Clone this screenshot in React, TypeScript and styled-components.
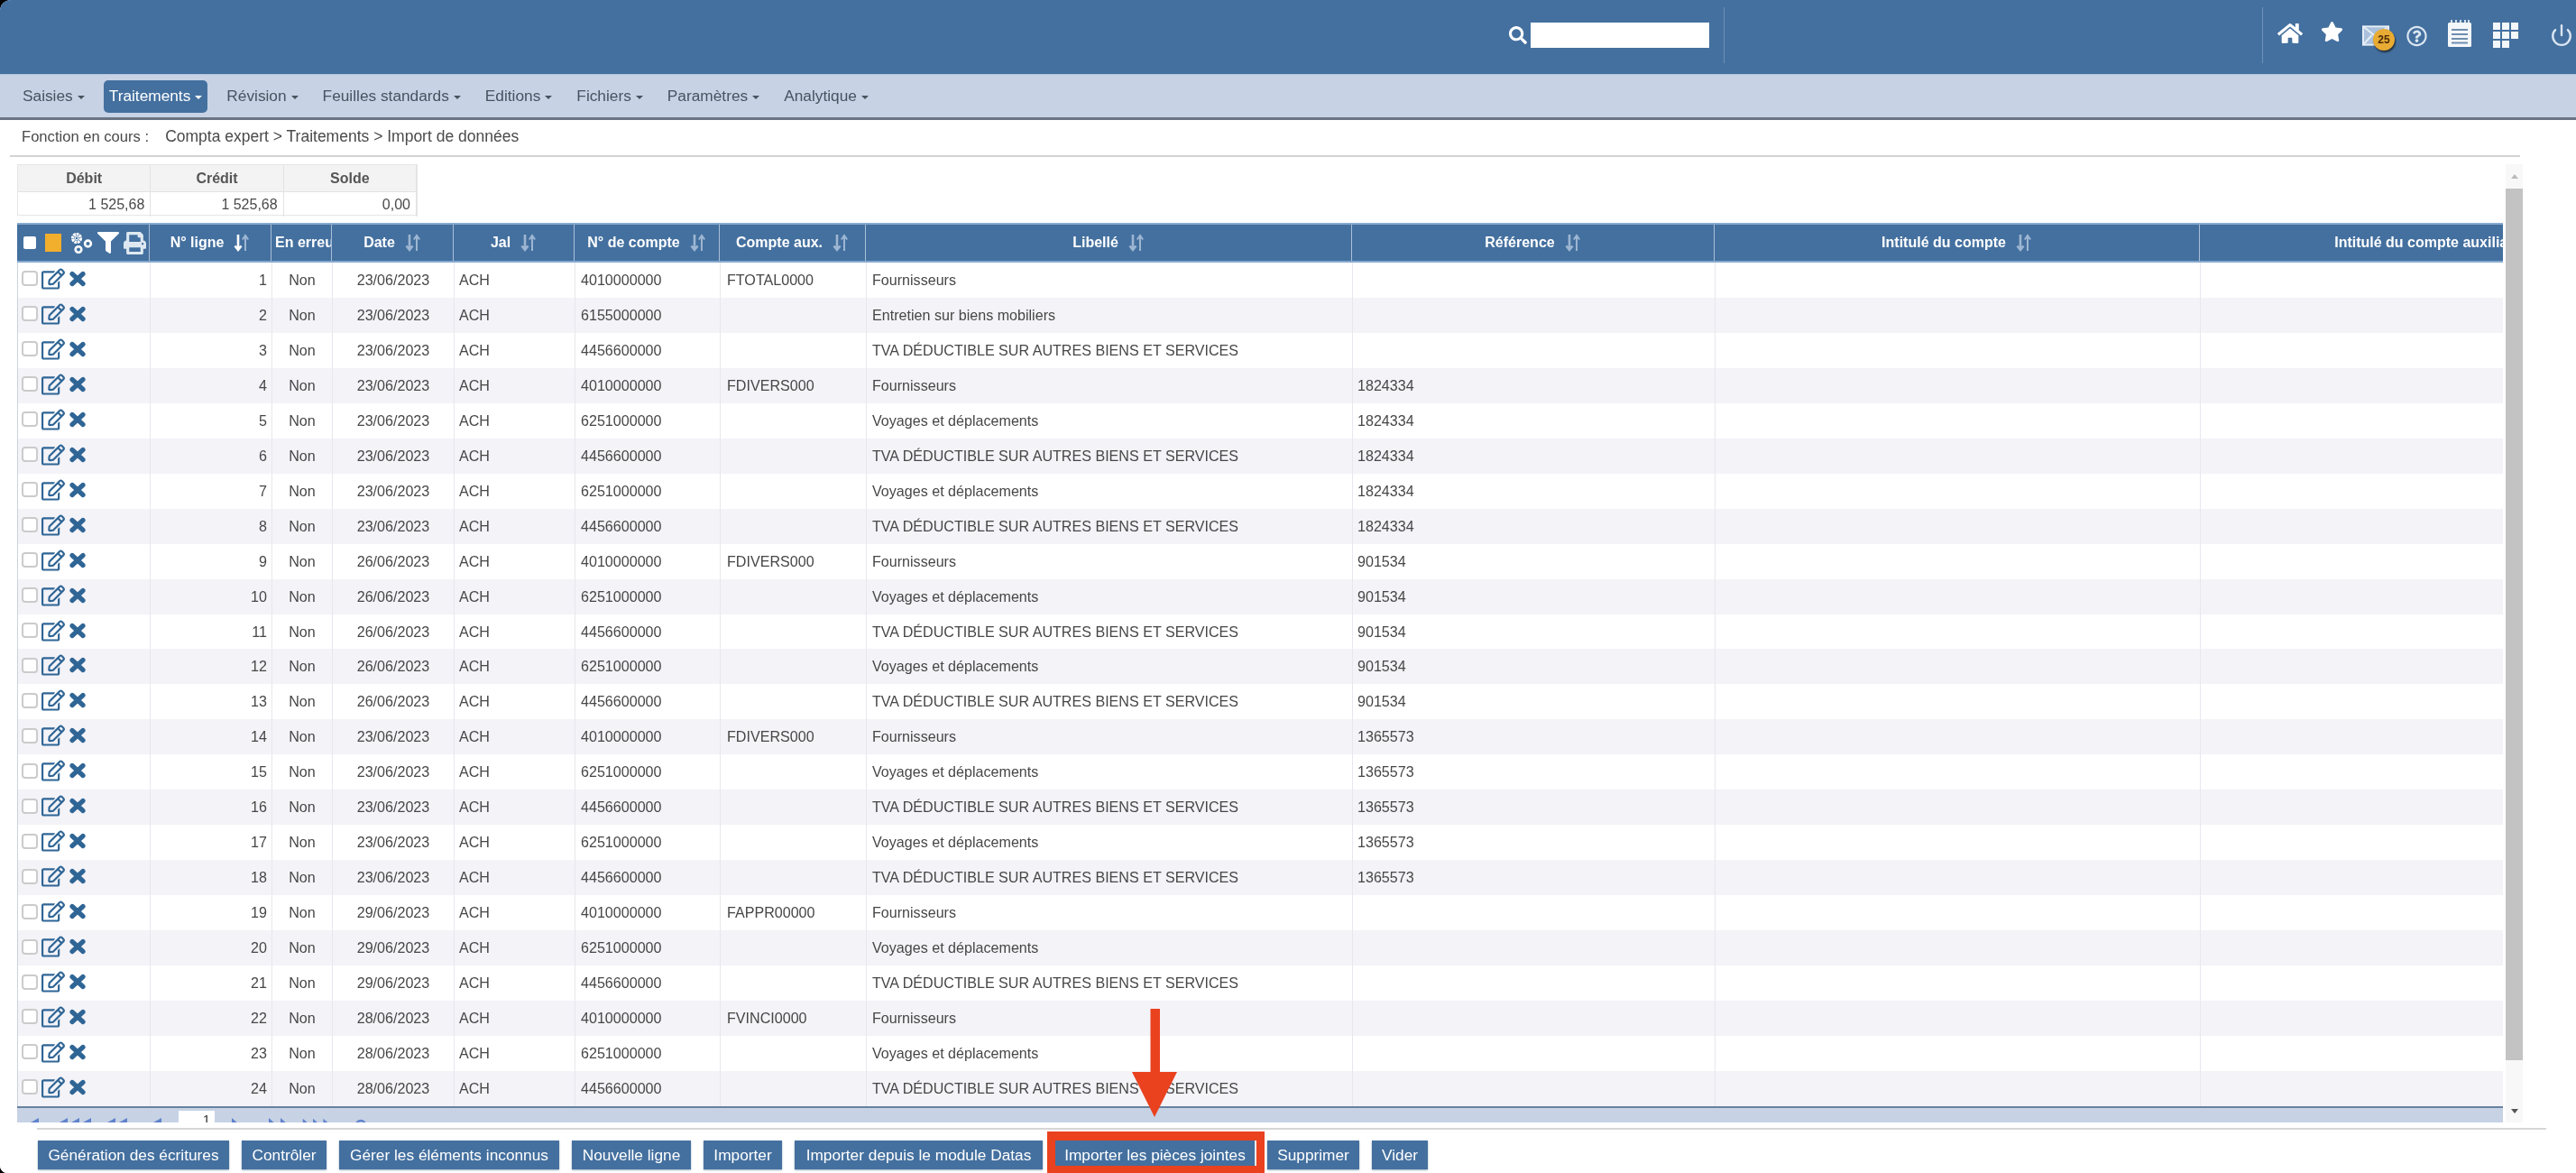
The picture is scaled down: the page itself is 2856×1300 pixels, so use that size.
import React from 'react';
import styled, { createGlobalStyle } from 'styled-components';
import { FaHome, FaStar, FaSearch, FaFilter, FaPrint, FaRegEdit, FaRegQuestionCircle } from 'react-icons/fa';
import { FiPower } from 'react-icons/fi';

const BLUE = '#44709f';
const PALE = '#c7d2e5';

const Global = createGlobalStyle`
  html, body { margin: 0; padding: 0; background: #000; }
  body { width: 2856px; height: 1300px; overflow: hidden; font-family: "Liberation Sans", Arial, sans-serif; }
  * { box-sizing: border-box; }
`;

const Stage = styled.div`
  position: relative;
  width: 2856px;
  height: 1300px;
  background: #fff;
  border-radius: 12px 0 0 8px;
  overflow: hidden;
`;

const Screen = styled.div`
  width: 2856px;
  height: 1300px;
  display: flex;
  flex-direction: column;
  background: #fff;
  filter: blur(0.7px);
`;

const TopBar = styled.header`
  height: 82px;
  flex: none;
  background: ${BLUE};
  display: flex;
  align-items: center;
  padding: 0 3px 4px 1672px;
  color: #fff;
`;

const SearchInput = styled.div`
  width: 198px;
  height: 28px;
  margin-left: 3px;
  background: #fff;
`;

const Divider = styled.div<{ $gap: number }>`
  width: 1px;
  height: 62px;
  margin-left: ${p => p.$gap}px;
  background: #6d90b6;
`;

const TopIcon = styled.div<{ $gap: number; $w: number; $dy?: number; $color?: string }>`
  position: relative;
  flex: none;
  width: ${p => p.$w}px;
  margin-left: ${p => p.$gap}px;
  margin-top: ${p => p.$dy ?? 0}px;
  display: flex;
  justify-content: center;
  color: ${p => p.$color ?? '#fff'};
`;

const Badge = styled.span`
  position: absolute;
  left: 12px;
  top: 4px;
  width: 24px;
  height: 24px;
  border-radius: 50%;
  background: #e8ab33;
  box-shadow: 1px 2px 2px #20303f;
  color: #4a2c08;
  font-size: 12px;
  font-weight: 700;
  display: flex;
  align-items: center;
  justify-content: center;
`;

const MenuBar = styled.nav`
  height: 48px;
  flex: none;
  background: ${PALE};
  border-top: 1px solid #b4c6e2;
  display: flex;
  align-items: center;
  gap: 15px;
  padding-left: 19px;
`;

const MenuItem = styled.div<{ $active?: boolean }>`
  height: 36px;
  padding: 0 6px;
  border-radius: 5px;
  display: flex;
  align-items: center;
  gap: 5px;
  font-size: 17.3px;
  color: ${p => (p.$active ? '#fff' : '#47535f')};
  background: ${p => (p.$active ? BLUE : 'transparent')};
`;

const Caret = styled.i`
  width: 0;
  height: 0;
  margin-top: 2px;
  border-left: 4px solid transparent;
  border-right: 4px solid transparent;
  border-top: 4px solid currentColor;
`;

const DarkRule = styled.div`
  height: 3px;
  flex: none;
  background: #6a7382;
`;

const Crumb = styled.div`
  height: 41px;
  flex: none;
  width: 2783px;
  margin-left: 11px;
  padding: 0 0 2px 13px;
  border-bottom: 2px solid #d3d3d6;
  display: flex;
  align-items: center;
  gap: 18px;
  font-size: 16.6px;
  color: #4a4a4a;
`;

const CrumbPath = styled.span`
  font-size: 17.5px;
`;

const Body = styled.main`
  height: 1062px;
  flex: none;
  margin-top: 8px;
  padding-left: 19px;
  display: flex;
`;

const LeftCol = styled.div`
  width: 2756px;
  display: flex;
  flex-direction: column;
`;

const Summary = styled.div`
  width: 444px;
  height: 57px;
  flex: none;
  display: grid;
  grid-template-columns: repeat(3, 1fr);
  grid-template-rows: 30px 27px;
  border: 1px solid #e6e6e6;
  font-size: 16px;
  color: #4a4a4a;
`;

const SumHead = styled.div`
  background: #f3f3f3;
  border-right: 1px solid #e2e2e2;
  border-bottom: 1px solid #e2e2e2;
  font-weight: 700;
  display: flex;
  align-items: center;
  justify-content: center;
  color: #555;
`;

const SumValue = styled.div`
  border-right: 1px solid #e2e2e2;
  display: flex;
  align-items: center;
  justify-content: flex-end;
  padding-right: 6px;
`;

const Grid = styled.section`
  flex: 1;
  margin-top: 8px;
  display: flex;
  flex-direction: column;
  overflow: hidden;
`;

const COLS = '147px 135px 67px 135px 134px 161px 162px 539px 402px 538px 540px';

const HeadRow = styled.div`
  width: 2960px;
  height: 44px;
  flex: none;
  display: grid;
  grid-template-columns: ${COLS};
  background: ${BLUE};
  border-top: 2px solid #86a9cf;
  border-bottom: 2px solid #86a9cf;
`;

const HeadCell = styled.div<{ $left?: boolean }>`
  border-right: 1px solid #a8bfd8;
  display: flex;
  align-items: center;
  justify-content: ${p => (p.$left ? 'flex-start' : 'center')};
  gap: 11px;
  padding: ${p => (p.$left ? '0 0 0 4px' : '0')};
  overflow: hidden;
  white-space: nowrap;
  color: #fff;
  font-size: 16px;
  font-weight: 700;
`;

const HeadTools = styled(HeadCell)`
  justify-content: flex-start;
  padding-left: 7px;
  gap: 0;
`;

const WhiteBox = styled.span`
  width: 14px;
  height: 14px;
  border-radius: 2px;
  background: #fff;
  margin-right: 10px;
`;

const OrangeBox = styled.span`
  width: 18px;
  height: 20px;
  background: #f2ae2d;
  margin-right: 10px;
`;

const ToolSlot = styled.span<{ $gap: number }>`
  display: flex;
  margin-right: ${p => p.$gap}px;
`;

const Rows = styled.div`
  width: 2960px;
  flex: none;
  border-left: 1px solid #c9d2dc;
`;

const Row = styled.div<{ $even: boolean }>`
  height: 38.96px;
  display: grid;
  grid-template-columns: ${COLS};
  background: ${p => (p.$even ? '#f3f3f8' : '#fff')};
  color: #474747;
  font-size: 16.1px;
`;

const Cell = styled.div<{ $align?: 'left' | 'center' | 'right'; $pad?: number }>`
  border-right: 1px solid #e7e7ee;
  display: flex;
  align-items: center;
  white-space: nowrap;
  overflow: hidden;
  justify-content: ${p => (p.$align === 'right' ? 'flex-end' : p.$align === 'center' ? 'center' : 'flex-start')};
  padding: 0 ${p => p.$pad ?? 5}px;
`;

const Check = styled.span`
  flex: none;
  width: 18px;
  height: 17px;
  border: 2px solid #cbcbcb;
  border-radius: 4px;
  background: #fff;
`;

const RowActions = styled(Cell)`
  color: #2f6595;
  padding-left: 4px;
  gap: 4px;
  padding-bottom: 3px;
`;

const Pager = styled.div`
  height: 19px;
  flex: none;
  background: ${PALE};
  border-top: 2px solid #66829f;
  display: flex;
  overflow: hidden;
`;

const PagerSlot = styled.div<{ $w: number }>`
  width: ${p => p.$w}px;
  flex: none;
  display: flex;
  justify-content: center;
  padding-top: 11px;
  color: #5f83cc;
`;

const PagerInput = styled.div`
  width: 40px;
  margin-top: 3px;
  flex: none;
  background: #fff;
  color: #333;
  font-size: 15px;
  text-align: right;
  padding: 1px 5px 0 0;
`;

const Scrollbar = styled.aside`
  width: 19px;
  margin-left: 3px;
  flex: none;
  background: #f8f8f8;
  display: flex;
  flex-direction: column;
`;

const ScrollButton = styled.div<{ $h: number; $down?: boolean }>`
  height: ${p => p.$h}px;
  flex: none;
  display: flex;
  justify-content: center;
  align-items: ${p => (p.$down ? 'flex-end' : 'center')};
  padding-bottom: ${p => (p.$down ? 10 : 0)}px;
  &::before {
    content: '';
    border-left: 4px solid transparent;
    border-right: 4px solid transparent;
    ${p => (p.$down ? 'border-top: 5px solid #555;' : 'border-bottom: 5px solid #bbb;')}
  }
`;

const ScrollThumb = styled.div`
  height: 966px;
  flex: none;
  background: #c3c3c3;
`;

const BottomRule = styled.div`
  height: 2px;
  flex: none;
  width: 2782px;
  margin: 6px 0 0 41px;
  background: #d6d6d6;
`;

const Actions = styled.footer`
  flex: none;
  display: flex;
  gap: 14px;
  margin-top: 12px;
  padding-left: 42px;
`;

const ActionButton = styled.button<{ $w: number }>`
  width: ${p => p.$w}px;
  height: 32px;
  padding: 0;
  border: 0;
  background: ${BLUE};
  color: #fff;
  font-family: inherit;
  font-size: 17.3px;
  white-space: nowrap;
  box-shadow: 0 1px 2px #9fb0c3;
`;

const RedFrame = styled.div`
  position: absolute;
  left: 1161px;
  top: 1254px;
  width: 241px;
  height: 46px;
  border: solid #ea411f;
  border-width: 10px 9px 8px 9px;
`;

const Arrow = styled.svg`
  position: absolute;
  left: 1255px;
  top: 1118px;
`;

const SortIcon = ({ active }: { active?: boolean }) => (
  <svg width="18" height="22" viewBox="0 0 18 22" fill="none">
    <path d="M5 2v16M1.5 14.5 5 19l3.500-4.500" stroke={active ? '#fff' : '#9db6d2'} strokeWidth="2.6" />
    <path d="M13 20V4M9.800 7.500 13 3l3.200 4.500" stroke="#9db6d2" strokeWidth="2" />
  </svg>
);

const Cogs = () => (
  <svg width="25" height="23" viewBox="0 0 25 23" fill="none" stroke="#fff" strokeWidth="2.6">
    <circle cx="7" cy="6" r="4.400" strokeDasharray="2.600 .7" strokeWidth="3.400" />
    <circle cx="7" cy="6" r="1.800" strokeWidth="1" />
    <circle cx="19.500" cy="12" r="3.400" />
    <circle cx="9" cy="18.500" r="3.300" />
  </svg>
);

const Mail = () => (
  <svg width="32" height="23" viewBox="0 0 32 23">
    <rect x="1" y="1" width="29" height="21" fill="#a9c1dc" stroke="#e6eef6" strokeWidth="2" />
    <path d="M1 1l14 11L30 1M1 22l10-11" fill="none" stroke="#e6eef6" strokeWidth="2" />
  </svg>
);

const Notepad = () => (
  <svg width="26" height="30" viewBox="0 0 26 30">
    <rect x="0" y="3" width="26" height="27" rx="1.500" fill="#f4f7fa" />
    <path d="M4 0v5M9 0v5M14 0v5M19 0v5M23 0v5" stroke="#f4f7fa" strokeWidth="1.600" />
    <path d="M4 11h18M4 16h18M4 21h18M4 25.500h18" stroke="#6f8eaf" strokeWidth="1.800" />
  </svg>
);

const Tiles = () => (
  <svg width="28" height="28" viewBox="0 0 28 28" fill="#f4f7fa">
    {[0, 10, 20].map(x => [0, 10].map(y => <rect key={`${x}-${y}`} x={x} y={y} width="8" height="8" />))}
    <rect x="0" y="20" width="8" height="8" />
    <rect x="10" y="20" width="8" height="8" />
  </svg>
);

const Cross = () => (
  <svg width="20" height="18" viewBox="0 0 20 18" fill="none" stroke="currentColor" strokeWidth="5.200" strokeLinecap="round">
    <path d="M4 3.500 16 14.500M16 3.500 4 14.500" />
  </svg>
);

const Tri = ({ n, dir }: { n: number; dir: 'l' | 'r' }) => (
  <svg width={n * 13} height="11" viewBox={`0 0 ${n * 13} 11`} fill="currentColor">
    {Array.from({ length: n }).map((_, i) => (
      <path key={i} d={dir === 'l' ? `M${i * 13 + 2} 5 L${i * 13 + 11} 0 V11Z` : `M${i * 13 + 2} 0 L${i * 13 + 11} 8 V11 H${i * 13 + 2}Z`} />
    ))}
  </svg>
);

type Kind = 'F' | 'V' | 'T' | 'E';
const LABEL: Record<Kind, string> = {
  F: 'Fournisseurs',
  V: 'Voyages et déplacements',
  T: 'TVA DÉDUCTIBLE SUR AUTRES BIENS ET SERVICES',
  E: 'Entretien sur biens mobiliers',
};
const ACCOUNT: Record<Kind, string> = { F: '4010000000', V: '6251000000', T: '4456600000', E: '6155000000' };

const DATA: [number, string, Kind, string, string][] = [
  [1, '23/06/2023', 'F', 'FTOTAL0000', ''],
  [2, '23/06/2023', 'E', '', ''],
  [3, '23/06/2023', 'T', '', ''],
  [4, '23/06/2023', 'F', 'FDIVERS000', '1824334'],
  [5, '23/06/2023', 'V', '', '1824334'],
  [6, '23/06/2023', 'T', '', '1824334'],
  [7, '23/06/2023', 'V', '', '1824334'],
  [8, '23/06/2023', 'T', '', '1824334'],
  [9, '26/06/2023', 'F', 'FDIVERS000', '901534'],
  [10, '26/06/2023', 'V', '', '901534'],
  [11, '26/06/2023', 'T', '', '901534'],
  [12, '26/06/2023', 'V', '', '901534'],
  [13, '26/06/2023', 'T', '', '901534'],
  [14, '23/06/2023', 'F', 'FDIVERS000', '1365573'],
  [15, '23/06/2023', 'V', '', '1365573'],
  [16, '23/06/2023', 'T', '', '1365573'],
  [17, '23/06/2023', 'V', '', '1365573'],
  [18, '23/06/2023', 'T', '', '1365573'],
  [19, '29/06/2023', 'F', 'FAPPR00000', ''],
  [20, '29/06/2023', 'V', '', ''],
  [21, '29/06/2023', 'T', '', ''],
  [22, '28/06/2023', 'F', 'FVINCI0000', ''],
  [23, '28/06/2023', 'V', '', ''],
  [24, '28/06/2023', 'T', '', ''],
];

const MENU = ['Saisies', 'Traitements', 'Révision', 'Feuilles standards', 'Editions', 'Fichiers', 'Paramètres', 'Analytique'];
const HEADS: string[] = ['Jal', 'N° de compte', 'Compte aux.', 'Libellé', 'Référence', 'Intitulé du compte', 'Intitulé du compte auxiliaire'];
const BUTTONS: [string, number][] = [
  ['Génération des écritures', 212], ['Contrôler', 94], ['Gérer les éléments inconnus', 244], ['Nouvelle ligne', 132],
  ['Importer', 87], ['Importer depuis le module Datas', 275], ['Importer les pièces jointes', 221], ['Supprimer', 102], ['Vider', 62],
];
const PAGER: [number, number, 'l' | 'r'][] = [[38, 1, 'l'], [52, 3, 'l'], [42, 2, 'l'], [47, 1, 'l']];
const PAGER2: [number, number, 'l' | 'r'][] = [[46, 1, 'r'], [50, 2, 'r'], [34, 3, 'r']];

export default function App() {
  return (
    <Stage>
      <Global />
      <Screen>
        <TopBar>
          <TopIcon $gap={0} $w={22}><FaSearch size={20} /></TopIcon>
          <SearchInput />
          <Divider $gap={16} />
          <Divider $gap={596} />
          <TopIcon $gap={16} $w={28} $dy={-4}><FaHome size={28} /></TopIcon>
          <TopIcon $gap={20} $w={25} $dy={-8}><FaStar size={26} /></TopIcon>
          <TopIcon $gap={21} $w={31}><Mail /><Badge>25</Badge></TopIcon>
          <TopIcon $gap={18} $w={23} $dy={2} $color="#dbe6f1"><FaRegQuestionCircle size={24} /></TopIcon>
          <TopIcon $gap={23} $w={26} $dy={-4}><Notepad /></TopIcon>
          <TopIcon $gap={24} $w={28}><Tiles /></TopIcon>
          <TopIcon $gap={35} $w={26} $color="#dbe6f1"><FiPower size={28} strokeWidth={2.2} /></TopIcon>
        </TopBar>
        <MenuBar>
          {MENU.map(m => (
            <MenuItem key={m} $active={m === 'Traitements'}>{m}<Caret /></MenuItem>
          ))}
        </MenuBar>
        <DarkRule />
        <Crumb>
          <span>Fonction en cours :</span>
          <CrumbPath>Compta expert &gt; Traitements &gt; Import de données</CrumbPath>
        </Crumb>
        <Body>
          <LeftCol>
            <Summary>
              <SumHead>Débit</SumHead>
              <SumHead>Crédit</SumHead>
              <SumHead>Solde</SumHead>
              <SumValue>1 525,68</SumValue>
              <SumValue>1 525,68</SumValue>
              <SumValue>0,00</SumValue>
            </Summary>
            <Grid>
              <HeadRow>
                <HeadTools>
                  <WhiteBox />
                  <OrangeBox />
                  <ToolSlot $gap={5}><Cogs /></ToolSlot>
                  <ToolSlot $gap={5}><FaFilter size={24} /></ToolSlot>
                  <ToolSlot $gap={0}><FaPrint size={25} color="#dfe8f1" /></ToolSlot>
                </HeadTools>
                <HeadCell>N° ligne<SortIcon active /></HeadCell>
                <HeadCell $left>En erreur</HeadCell>
                <HeadCell>Date<SortIcon /></HeadCell>
                {HEADS.map(h => (
                  <HeadCell key={h}>{h}<SortIcon /></HeadCell>
                ))}
              </HeadRow>
              <Rows>
                {DATA.map(([n, date, kind, aux, ref]) => (
                  <Row key={n} $even={n % 2 === 0}>
                    <RowActions>
                      <Check />
                      <FaRegEdit size={26} />
                      <Cross />
                    </RowActions>
                    <Cell $align="right">{n}</Cell>
                    <Cell $align="center">Non</Cell>
                    <Cell $align="center">{date}</Cell>
                    <Cell>ACH</Cell>
                    <Cell $pad={6}>{ACCOUNT[kind]}</Cell>
                    <Cell $pad={7}>{aux}</Cell>
                    <Cell $pad={6}>{LABEL[kind]}</Cell>
                    <Cell>{ref}</Cell>
                    <Cell />
                    <Cell />
                  </Row>
                ))}
              </Rows>
              <Pager>
                {PAGER.map(([w, n, d], i) => (
                  <PagerSlot key={i} $w={w}><Tri n={n} dir={d} /></PagerSlot>
                ))}
                <PagerInput>1</PagerInput>
                {PAGER2.map(([w, n, d], i) => (
                  <PagerSlot key={i} $w={w}><Tri n={n} dir={d} /></PagerSlot>
                ))}
                <PagerSlot $w={64}>
                  <svg width="14" height="11" viewBox="0 0 14 11" fill="none" stroke="currentColor" strokeWidth="2.400">
                    <circle cx="7" cy="8" r="5" />
                  </svg>
                </PagerSlot>
              </Pager>
            </Grid>
          </LeftCol>
          <Scrollbar>
            <ScrollButton $h={27} />
            <ScrollThumb />
            <ScrollButton $h={69} $down />
          </Scrollbar>
        </Body>
        <BottomRule />
        <Actions>
          {BUTTONS.map(([b, w]) => (
            <ActionButton key={b} $w={w}>{b}</ActionButton>
          ))}
        </Actions>
      </Screen>
      <RedFrame />
      <Arrow width="50" height="120" viewBox="0 0 50 120">
        <path d="M20.500 0h10.500v70H50L25 120 0 70h20.500z" fill="#ea411f" />
      </Arrow>
    </Stage>
  );
}
